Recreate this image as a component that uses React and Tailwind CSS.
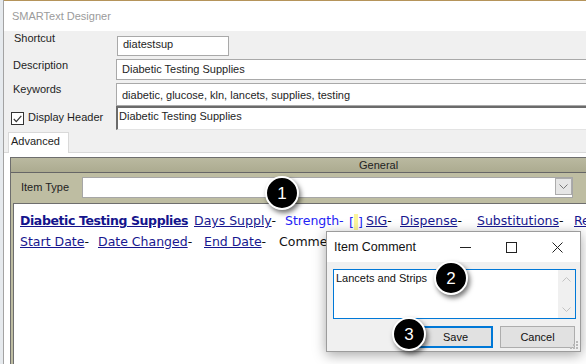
import React from 'react'

const LINK = 'underline text-[#17178f]'
const DASH = 'text-[#111]'

function Callout({ n, className }) {
  return (
    <div
      className={`absolute flex h-[34px] w-[34px] items-center justify-center rounded-full border-2 border-white bg-black text-[17px] leading-none text-white shadow-[2px_3px_5px_rgba(0,0,0,0.55)] ${className}`}
    >
      {n}
    </div>
  )
}

function Chevron({ up, className }) {
  return (
    <svg className={className} width="9" height="6" viewBox="0 0 9 6" fill="none" stroke="currentColor" strokeWidth="1">
      {up ? <path d="M0.5 5.5 L4.5 1.5 L8.5 5.5" /> : <path d="M0.5 0.5 L4.5 4.5 L8.5 0.5" />}
    </svg>
  )
}

function Token({ w, children }) {
  return <span className={`shrink-0 whitespace-pre ${w}`}>{children}</span>
}

export default function App() {
  return (
    <div className="relative h-[364px] w-[586px] overflow-hidden bg-[#f0f0f0] font-['Liberation_Sans',Arial,sans-serif] text-[11px] text-[#1e1e1e]">
      <div className="flex h-full">
        {/* edge of the window behind */}
        <div className="w-[4px] shrink-0 border-r border-[#a3a3a3] bg-[#e6eaee]" />

        <div className="flex min-w-0 flex-1 flex-col overflow-hidden">
          {/* Title bar */}
          <div className="flex h-[31px] shrink-0 items-center border-t border-[#b5945a] bg-white pl-[8px] text-[11px] text-[#9b9b9b]">
            SMARText Designer
          </div>

          {/* Shortcut */}
          <div className="mt-[5px] flex h-[20px] shrink-0">
            <div className="-mt-[4px] w-[113px] shrink-0 pl-[10px] leading-[13px]">Shortcut</div>
            <div className="w-[112px] shrink-0 border border-[#a9a9a9] bg-white pl-[5px] pt-[1px] leading-[13px]">diatestsup</div>
          </div>

          {/* Description */}
          <div className="mt-[3px] flex h-[21px] shrink-0">
            <div className="w-[112px] shrink-0 pl-[9px] leading-[13px]">Description</div>
            <div className="w-[600px] shrink-0 border border-[#a9a9a9] bg-white pl-[5px] pt-[3px] leading-[13px]">Diabetic Testing Supplies</div>
          </div>

          {/* Keywords */}
          <div className="mt-[3px] flex h-[23px] shrink-0">
            <div className="w-[112px] shrink-0 pl-[9px] leading-[13px]">Keywords</div>
            <div className="w-[600px] shrink-0 border border-[#a9a9a9] bg-white pl-[5px] pt-[5px] leading-[13px]">
              diabetic, glucose, kln, lancets, supplies, testing
            </div>
          </div>

          {/* Display Header */}
          <div className="flex h-[24px] shrink-0">
            <div className="flex w-[112px] shrink-0 items-start">
              <div className="ml-[7px] mt-[6px] flex h-[13px] w-[13px] shrink-0 items-center justify-center border border-[#333] bg-white">
                <svg width="9" height="8" viewBox="0 0 9 8" fill="none" stroke="#333" strokeWidth="1.2">
                  <path d="M0.8 4 L3.3 6.6 L8.3 0.8" />
                </svg>
              </div>
              <div className="ml-[4px] mt-[5px] whitespace-nowrap leading-[13px]">Display Header</div>
            </div>
            <div className="w-[600px] shrink-0 border-b border-l-2 border-t-2 border-b-[#e3e3e3] border-l-[#6b6b6b] border-t-[#6b6b6b] bg-white pl-[1px] pt-[2px] leading-[13px]">
              Diabetic Testing Supplies
            </div>
          </div>

          {/* Tabs */}
          <div className="flex h-[23px] shrink-0 items-end">
            <div className="h-[21px] w-[4px] shrink-0 border-b border-[#d9d9d9]" />
            <div className="h-[21px] w-[61px] shrink-0 border border-b-0 border-[#d9d9d9] bg-white pl-[2px] pt-[2px] leading-[13px]">Advanced</div>
            <div className="h-[21px] flex-1 border-b border-[#d9d9d9]" />
          </div>

          {/* Tab page */}
          <div className="flex min-h-0 flex-1 flex-col bg-white pl-[6px] pt-[4px]">
            <div className="flex min-h-0 flex-1 flex-col border-l border-t border-[#6e6e6e] bg-[#bebda2]">
              <div className="h-[15px] shrink-0 border-b border-[#666] bg-gradient-to-b from-[#bab9a0] to-[#acab90] pl-[348px] leading-[14px] text-[#222]">
                General
              </div>
              <div className="flex h-[30px] shrink-0 items-start pt-[4px]">
                <div className="flex h-[21px] w-[71px] shrink-0 items-center pl-[10px] text-[#222]">Item Type</div>
                <div className="flex h-[21px] w-[491px] shrink-0 items-start justify-end border border-[#a6a6a6] bg-white">
                  <div className="flex h-[17px] w-[17px] items-center justify-center border border-[#acacac] bg-[#e6e6e6] text-[#777]">
                    <Chevron className="mt-[1px]" />
                  </div>
                </div>
              </div>
              <div className="ml-[2px] flex-1 border-l border-t border-[#6e6e6e] bg-white pl-[6px] pt-[7px] font-['DejaVu_Sans',Verdana,sans-serif] text-[12.5px] leading-[19px]">
                <div className="flex">
                  <Token w="w-[174px]">
                    <span className="font-bold tracking-[-0.4px] underline text-[#14148c]">Diabetic Testing Supplies</span>
                  </Token>
                  <Token w="w-[91px]">
                    <span className={LINK}>Days Supply</span>
                    <span className={DASH}>-</span>
                  </Token>
                  <Token w="w-[64px]">
                    <span className="text-[#2323f5]">Strength-</span>
                  </Token>
                  <Token w="w-[17px]">
                    <span className="text-[#2323f5]">[</span>
                    <span className="inline-block h-[16px] w-[4px] translate-y-[3px] bg-[#fbf59a]" />
                    <span className="text-[#2323f5]">]</span>
                  </Token>
                  <Token w="w-[34px]">
                    <span className={LINK}>SIG</span>
                    <span className={DASH}>-</span>
                  </Token>
                  <Token w="w-[77px]">
                    <span className={LINK}>Dispense</span>
                    <span className={DASH}>-</span>
                  </Token>
                  <Token w="w-[97px]">
                    <span className={LINK}>Substitutions</span>
                    <span className={DASH}>-</span>
                  </Token>
                  <Token w="w-[80px]">
                    <span className={LINK}>Refills</span>
                    <span className={DASH}>-</span>
                  </Token>
                </div>
                <div className="flex">
                  <Token w="w-[78px]">
                    <span className={LINK}>Start Date</span>
                    <span className={DASH}>-</span>
                  </Token>
                  <Token w="w-[106px]">
                    <span className={LINK}>Date Changed</span>
                    <span className={DASH}>-</span>
                  </Token>
                  <Token w="w-[75px]">
                    <span className={LINK}>End Date</span>
                    <span className={DASH}>-</span>
                  </Token>
                  <Token w="w-[120px]">
                    <span className="text-[#111]">Comment-</span>
                  </Token>
                </div>
              </div>
            </div>
          </div>
        </div>
      </div>

      {/* Item Comment dialog */}
      <div className="absolute left-[326px] top-[231px] flex h-[121px] w-[255px] flex-col border border-[#9c9c9c] bg-[#f0f0f0] shadow-[0_3px_12px_rgba(0,0,0,0.35)]">
        <div className="flex h-[30px] shrink-0 bg-white">
          <div className="flex flex-1 items-center pl-[7px] text-[12.5px] text-[#111]">Item Comment</div>
          <div className="flex w-[46px] items-center justify-center">
            <svg width="11" height="1" viewBox="0 0 11 1"><rect width="11" height="1" fill="#222" /></svg>
          </div>
          <div className="flex w-[46px] items-center justify-center">
            <svg width="11" height="11" viewBox="0 0 11 11" fill="none" stroke="#222" strokeWidth="1">
              <rect x="0.5" y="0.5" width="10" height="10" />
            </svg>
          </div>
          <div className="flex w-[46px] items-center justify-center">
            <svg width="11" height="11" viewBox="0 0 11 11" fill="none" stroke="#222" strokeWidth="1">
              <path d="M0.5 0.5 L10.5 10.5 M10.5 0.5 L0.5 10.5" />
            </svg>
          </div>
        </div>
        <div className="ml-[6px] mt-[7px] flex h-[50px] w-[243px] border border-[#0078d7] bg-white">
          <div className="flex-1 pl-[2px] pt-[2px] leading-[13px] text-[#111]">Lancets and Strips</div>
          <div className="flex w-[17px] flex-col justify-between bg-[#f0f0f0] text-[#c2c2c2]">
            <div className="flex h-[17px] items-center justify-center"><Chevron up /></div>
            <div className="flex h-[17px] items-center justify-center"><Chevron /></div>
          </div>
        </div>
        <div className="mt-[7px] flex justify-end gap-[7px] pr-[5px]">
          <div className="flex h-[22px] w-[75px] items-center justify-center border-2 border-[#0078d7] bg-[#e1e1e1] text-[#111]">Save</div>
          <div className="flex h-[22px] w-[75px] items-center justify-center border border-[#adadad] bg-[#e1e1e1] text-[#111]">Cancel</div>
        </div>
        <svg className="absolute bottom-[2px] right-[2px]" width="8" height="8" viewBox="0 0 8 8" fill="#b9b9b9">
          <rect x="6" y="0" width="2" height="2" />
          <rect x="3" y="3" width="2" height="2" />
          <rect x="6" y="3" width="2" height="2" />
          <rect x="0" y="6" width="2" height="2" />
          <rect x="3" y="6" width="2" height="2" />
          <rect x="6" y="6" width="2" height="2" />
        </svg>
      </div>

      <Callout n="1" className="left-[265px] top-[176px]" />
      <Callout n="2" className="left-[434px] top-[261px]" />
      <Callout n="3" className="left-[392px] top-[317px]" />
    </div>
  )
}
